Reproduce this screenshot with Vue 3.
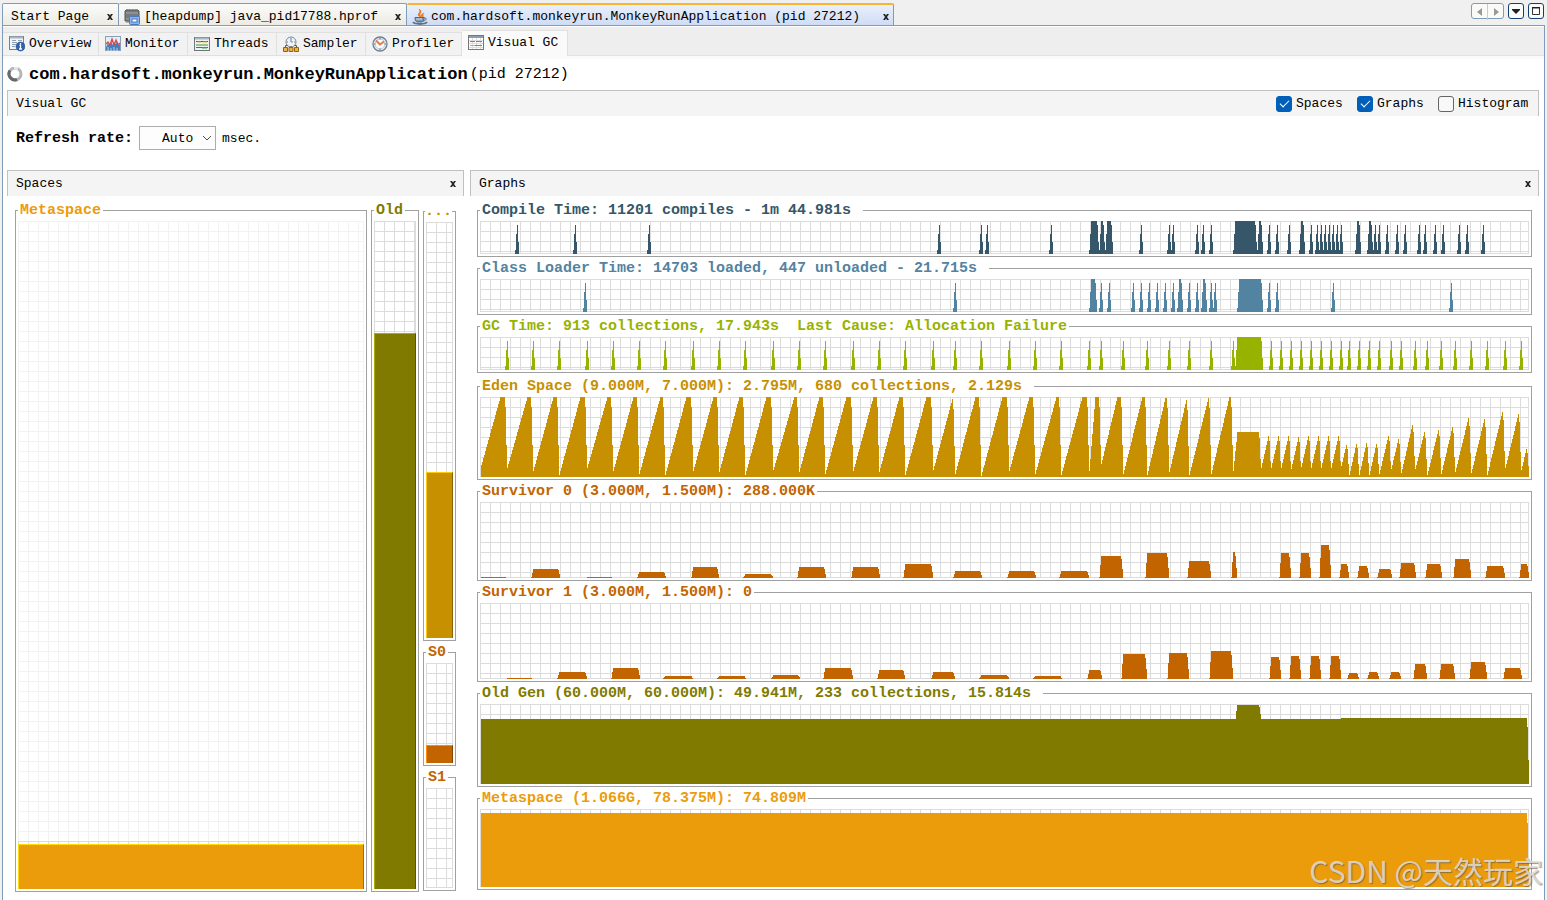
<script setup>
import { ref } from 'vue'

const ORIGIN = 480
const WIDTH = 1049

const refresh = ref('auto')
const showSpaces = ref(true)
const showGraphs = ref(true)
const showHistogram = ref(false)

function blank() {
  return new Array(WIDTH).fill(0)
}

function raise(cols, x, h) {
  const i = x - ORIGIN
  if (i >= 0 && i < WIDTH) cols[i] = Math.max(cols[i], h)
}

function fill(cols, from, to, h) {
  for (let x = from; x < to; x++) raise(cols, x, h)
}

// Activity series: short peaks plus plateaus [from, to) of full load
function activity(peaks, blocks) {
  const cols = blank()
  for (const p of peaks) {
    raise(cols, p - 2, 4)
    raise(cols, p - 1, 20)
    raise(cols, p, 29)
    raise(cols, p + 1, 12)
  }
  for (const [a, b] of blocks) {
    raise(cols, a - 2, 4)
    raise(cols, a - 1, 20)
    fill(cols, a, b, 33)
    raise(cols, b, 29)
    raise(cols, b + 1, 12)
  }
  return cols
}

function survivor(blocks) {
  const cols = blank()
  for (const [a, b, h] of blocks) {
    if (h > 1) {
      raise(cols, a - 2, 1)
      raise(cols, a - 1, Math.round(h * 0.6))
      raise(cols, b, Math.round(h * 0.85))
      raise(cols, b + 1, Math.round(h * 0.4))
    }
    fill(cols, a, b, h)
  }
  return cols
}

// Eden cycles: [collection x, x where the peak is reached, peak, level after collection]
function eden(cycles) {
  const cols = blank()
  let px = 480
  let level = 8
  for (const [g, top, peak, after] of cycles) {
    for (let x = px + 1; x < g - 2; x++) {
      const t = Math.min(1, (x - px) / (top - px))
      raise(cols, x, Math.round(level + (peak - level) * t))
    }
    raise(cols, g - 2, Math.round(peak * 0.87))
    raise(cols, g - 1, Math.round(peak * 0.4))
    raise(cols, g, after)
    px = g
    level = after
  }
  return cols
}

function path(cols, height) {
  let d = `M1 ${height}`
  for (let i = 1; i < cols.length; i++) {
    d += `V${height - cols[i]}H${i + 1}`
  }
  return d + `V${height}Z`
}

const compile = activity(
  [517, 575, 649, 939, 981, 987, 1051, 1141, 1169, 1173, 1197, 1203, 1211, 1269, 1277, 1289, 1311, 1317, 1321, 1325,
    1329, 1333, 1337, 1341, 1375, 1379, 1387, 1397, 1405, 1419, 1425, 1435, 1443, 1459, 1467, 1483],
  [[1091, 1097], [1101, 1103], [1107, 1111], [1235, 1255], [1259, 1261], [1301, 1303], [1357, 1359], [1369, 1371]]
)
const loader = activity(
  [585, 955, 1101, 1109, 1133, 1141, 1149, 1157, 1165, 1173, 1189, 1197, 1211, 1215, 1269, 1277, 1333, 1451],
  [[1091, 1095], [1179, 1181], [1203, 1205], [1239, 1261]]
)
const gc = activity(
  [507, 533, 559, 587, 613, 639, 665, 693, 719, 745, 773, 799, 825, 853, 879, 905, 933, 955, 981, 1009, 1035, 1061,
    1089, 1101, 1123, 1147, 1169, 1189, 1211, 1233, 1271, 1281, 1291, 1301, 1311, 1321, 1331, 1341, 1349, 1359, 1369,
    1379, 1391, 1401, 1415, 1427, 1441, 1455, 1471, 1487, 1505, 1521],
  [[1237, 1261]]
)
const edenCols = eden([
  [507, 500, 80, 9], [533, 527, 80, 6], [559, 553, 80, 2], [587, 580, 80, 9], [613, 607, 80, 6], [639, 633, 80, 3],
  [665, 660, 80, 2], [693, 686, 80, 6], [719, 713, 80, 5], [745, 739, 80, 2], [773, 766, 80, 7], [799, 794, 80, 5],
  [825, 819, 80, 3], [853, 846, 80, 6], [879, 873, 80, 5], [905, 899, 80, 2], [933, 926, 80, 7], [955, 952, 78, 3],
  [981, 975, 80, 1], [1009, 1002, 80, 6], [1035, 1029, 80, 3], [1061, 1056, 80, 2], [1089, 1082, 80, 6],
  [1101, 1095, 80, 13], [1123, 1117, 80, 3], [1147, 1142, 80, 2], [1169, 1165, 79, 5], [1189, 1186, 77, 2],
  [1211, 1208, 79, 3], [1233, 1229, 80, 6], [1261, 1237, 45, 9], [1271, 1268, 41, 9], [1281, 1278, 41, 9],
  [1291, 1288, 41, 8], [1301, 1298, 40, 10], [1311, 1308, 41, 9], [1321, 1318, 41, 9], [1331, 1328, 41, 9],
  [1341, 1338, 41, 11], [1349, 1346, 32, 2], [1359, 1356, 33, 2], [1369, 1366, 34, 2], [1379, 1376, 33, 3],
  [1391, 1388, 41, 8], [1401, 1398, 38, 4], [1415, 1412, 52, 8], [1427, 1424, 45, 2], [1441, 1438, 47, 3],
  [1455, 1452, 50, 5], [1471, 1468, 59, 4], [1487, 1484, 58, 2], [1505, 1502, 65, 9], [1521, 1518, 63, 7],
  [1529, 1526, 28, 7]
])
const s0 = survivor([
  [481, 506, 1], [533, 558, 9], [587, 612, 1], [639, 664, 6], [693, 717, 11], [745, 771, 4], [799, 824, 11],
  [853, 878, 11], [905, 931, 14], [955, 980, 7], [1009, 1034, 7], [1061, 1087, 7], [1101, 1121, 22], [1147, 1167, 25],
  [1189, 1209, 17], [1233, 1235, 26], [1281, 1289, 25], [1301, 1309, 25], [1321, 1329, 33], [1341, 1347, 14],
  [1359, 1367, 12], [1379, 1390, 9], [1401, 1414, 15], [1427, 1440, 14], [1455, 1469, 19], [1487, 1503, 12],
  [1521, 1527, 14]
])
const s1 = survivor([
  [507, 532, 1], [559, 585, 7], [613, 638, 11], [665, 691, 3], [719, 744, 3], [773, 798, 4], [825, 851, 11],
  [879, 903, 9], [933, 953, 7], [981, 1007, 4], [1035, 1060, 3], [1089, 1100, 9], [1123, 1145, 25], [1169, 1187, 26],
  [1211, 1231, 28], [1271, 1279, 22], [1291, 1299, 23], [1311, 1319, 23], [1331, 1339, 23], [1349, 1357, 6],
  [1369, 1377, 7], [1391, 1399, 7], [1415, 1425, 15], [1441, 1453, 15], [1471, 1485, 17], [1505, 1520, 11]
])
const old = blank()
fill(old, 481, 1341, 65)
fill(old, 1341, 1527, 66)
fill(old, 1236, 1237, 73)
fill(old, 1237, 1259, 79)
fill(old, 1259, 1260, 77)
fill(old, 1260, 1261, 70)
fill(old, 1527, 1528, 57)
fill(old, 1528, 1529, 24)
const meta = blank()
fill(meta, 481, 1527, 74)
fill(meta, 1527, 1528, 64)
fill(meta, 1528, 1529, 24)

const graphs = [
  { id: 'compile', title: 'Compile Time: 11201 compiles - 1m 44.981s', h: 33, cols: compile, trail: true },
  { id: 'loader', title: 'Class Loader Time: 14703 loaded, 447 unloaded - 21.715s', h: 33, cols: loader, trail: true },
  { id: 'gc', title: 'GC Time: 913 collections, 17.943s\u00a0 Last Cause: Allocation Failure', h: 33, cols: gc },
  { id: 'eden', title: 'Eden Space (9.000M, 7.000M): 2.795M, 680 collections, 2.129s', h: 80, cols: edenCols, trail: true },
  { id: 'survivor', title: 'Survivor 0 (3.000M, 1.500M): 288.000K', h: 76, cols: s0 },
  { id: 'survivor', title: 'Survivor 1 (3.000M, 1.500M): 0', h: 76, cols: s1 },
  { id: 'old', title: 'Old Gen (60.000M, 60.000M): 49.941M, 233 collections, 15.814s', h: 80, cols: old, trail: true },
  { id: 'meta', title: 'Metaspace (1.066G, 78.375M): 74.809M', h: 78, cols: meta }
].map((g) => ({ ...g, d: path(g.cols, g.h) }))

const used = { meta: 45 / 668, old: 556 / 668, eden: 166 / 416, s0: 18 / 100 }
const pct = (v) => `${(v * 100).toFixed(2)}%`
</script>

<template>
  <div class="app">
    <header class="topbar">
      <nav class="doc-tabs" aria-label="Documents">
        <div class="doc start">
          <a href="#start">Start Page</a>
          <button class="close" aria-label="Close Start Page"><svg viewBox="0 0 6 6"><path d="M0 0h2l1 1.500L4 0h2L4 3l2 3H4L3 4.500 2 6H0l2-3z" /></svg></button>
        </div>
        <div class="doc dump">
          <svg class="ic" viewBox="0 0 16 16">
            <path d="M2 1h12l1 1v10H1V2z" fill="#777b80" stroke="#55585c" />
            <path d="M2 4h12M2 10h5" stroke="#a4a7aa" />
            <path d="M3 12v2M5 12v2M3 0v1M6 0v1M9 0v1M12 0v1" stroke="#777" />
            <rect x="5.500" y="7.500" width="10" height="8" rx="1" fill="#8db4ea" stroke="#4a78bd" />
            <rect x="8" y="10" width="5" height="3" fill="#fff" stroke="#4a78bd" />
          </svg>
          <a href="#heapdump">[heapdump] java_pid17788.hprof</a>
          <button class="close" aria-label="Close heapdump"><svg viewBox="0 0 6 6"><path d="M0 0h2l1 1.500L4 0h2L4 3l2 3H4L3 4.500 2 6H0l2-3z" /></svg></button>
        </div>
        <div class="doc active">
          <svg class="ic" viewBox="0 0 16 16">
            <path d="M8 8C3 5 10 4 7 0c5 3-1 4 2 8zM10 8c-2-2 0-3 2-4-2 2 0 2-1 4z" fill="#ee7a1d" stroke="#e06c10" stroke-width=".5" />
            <path d="M3 8.500h9v1c0 2-1 3-2 3.500H5c-1-.5-2-1.500-2-3.500z" fill="#7f97ad" stroke="#4c6780" />
            <path d="M12 9c3-.5 3 2.500-1 3" fill="none" stroke="#4c6780" />
            <path d="M1 13c2 2.500 12 2.500 14 0" fill="none" stroke="#5a7389" stroke-width="2" />
            <path d="M4 10h6" stroke="#d4e0ea" />
          </svg>
          <a href="#app" aria-current="page">com.hardsoft.monkeyrun.MonkeyRunApplication (pid 27212)</a>
          <button class="close" aria-label="Close application"><svg viewBox="0 0 6 6"><path d="M0 0h2l1 1.500L4 0h2L4 3l2 3H4L3 4.500 2 6H0l2-3z" /></svg></button>
        </div>
      </nav>
      <div class="window-tools">
        <div class="pair">
          <button aria-label="Scroll left"><svg viewBox="0 0 14 14"><path d="M10 3v8L5 7z" fill="#999" /></svg></button>
          <button aria-label="Scroll right"><svg viewBox="0 0 14 14"><path d="M6 3v8l5-4z" fill="#999" /></svg></button>
        </div>
        <button class="tool" aria-label="Document list"><svg viewBox="0 0 14 14"><path d="M3 5h8v1L7 10 3 6z" fill="#222" /></svg></button>
        <button class="tool" aria-label="Maximize"><svg viewBox="0 0 14 14"><path d="M3.500 4v6.500h7V4z" fill="none" stroke="#333" /><path d="M3 3.500h8" stroke="#222" /></svg></button>
      </div>
    </header>

    <main class="window">
      <nav class="views" aria-label="Views">
        <a href="#overview" class="view wide">
          <svg class="ic" viewBox="0 0 16 16">
            <rect x=".5" y=".5" width="14" height="13" fill="#f1f4f8" stroke="#73808f" />
            <path d="M1 1.500h13" stroke="#aab4c0" stroke-width="2" />
            <path d="M3 4.500h4M3 6.500h5M3 8.500h4M3 10.500h3M9 4.500h4" stroke="#8fa1b5" />
            <circle cx="11.500" cy="10.500" r="4.500" fill="#2e62ad" stroke="#1c427e" stroke-width=".5" />
            <path d="M11.500 7v1.500M10.500 9.500h1v3M10 13h3" stroke="#fff" stroke-width="1.300" />
          </svg>
          Overview
        </a>
        <a href="#monitor" class="view">
          <svg class="ic" viewBox="0 0 16 16">
            <rect x=".5" y=".5" width="15" height="14" fill="#e6edf5" stroke="#8ba0b8" />
            <path d="M1 11l2-4 1 2 2-3 2 3 1-3 2 2 1-3 2 4 1-1v6H1z" fill="#3f83c4" />
            <path d="M1 8l2-2 2 3 2-6 2 6 2-5 2 5 2-2" fill="none" stroke="#d84848" stroke-width="1.300" />
            <path d="M3 15v-4M6 15v-3M9 15v-4M12 15v-3" stroke="#e7f0f9" stroke-width=".7" />
          </svg>
          Monitor
        </a>
        <a href="#threads" class="view">
          <svg class="ic" viewBox="0 0 16 16">
            <rect x=".5" y="1.500" width="15" height="13" fill="#eef0f2" stroke="#6c7783" />
            <path d="M1 2.500h14" stroke="#aab6c2" stroke-width="2" />
            <path d="M2 5.500h12" stroke="#555" /><path d="M3 6h4M9 6h4" stroke="#e0ba36" />
            <path d="M2 9h12" stroke="#3d9a3d" /><path d="M2 11.500h12" stroke="#666" /><path d="M8 12h5" stroke="#51b04c" />
          </svg>
          Threads
        </a>
        <a href="#sampler" class="view">
          <svg class="ic" viewBox="0 0 16 16">
            <circle cx="8" cy="6" r="5" fill="#eef4fa" stroke="#798796" />
            <path d="M8 2v4M4 6h1M11 6h1" stroke="#3a87c8" /><path d="M8 6h2" stroke="#e07030" />
            <path d="M8 10v2M2.500 12V9.500h2M13.500 12V9.500h-2" fill="none" stroke="#6c5520" />
            <path d="M.5 11.500h4v4h-4zM6 11.500h4v4H6zM11.500 11.500h4v4h-4z" fill="#e9b24a" stroke="#936513" />
          </svg>
          Sampler
        </a>
        <a href="#profiler" class="view wide">
          <svg class="ic" viewBox="0 0 16 16">
            <circle cx="8" cy="8" r="7" fill="#e9f0f7" stroke="#707f8e" stroke-width="1.300" />
            <circle cx="8" cy="8" r="5" fill="#f7fafc" stroke="#b9c9d8" />
            <path d="M4 4.500l4 4 4-3" fill="none" stroke="#e37c48" stroke-width="2" />
            <path d="M8 2v1.500M8 12.500V14M2 8h1.500M12.500 8H14" stroke="#5b7895" />
          </svg>
          Profiler
        </a>
        <a href="#visualgc" class="view selected" aria-current="page">
          <svg class="ic" viewBox="0 0 16 16">
            <rect x=".5" y=".5" width="15" height="14" fill="#fff" stroke="#777" />
            <path d="M1 2h14" stroke="#8b9eb4" stroke-width="2" />
            <path d="M4.500 3v11M8.500 3v11M12.500 3v11M1 5.500h14M1 8.500h14M1 12.500h14" stroke="#ddd" />
            <path d="M2 6.500h5M8 6.500h6" stroke="#40b428" /><path d="M2 10.500h5" stroke="#e9ad2f" /><path d="M7 10.500h7" stroke="#40b428" />
          </svg>
          Visual GC
        </a>
      </nav>

      <div class="content">
        <h1 class="title">
          <svg class="ic" viewBox="0 0 16 16">
            <circle cx="8" cy="7" r="6" fill="none" stroke="#b4b6ba" stroke-width="3" />
            <path d="M3 3.500a6 6 0 0 0 7 9" fill="none" stroke="#66686e" stroke-width="3" />
            <path d="M7 1a6 6 0 0 1 4 1" fill="none" stroke="#e6e6e9" stroke-width="3" />
          </svg>
          <b>com.hardsoft.monkeyrun.MonkeyRunApplication</b>
          <span>(pid 27212)</span>
        </h1>

        <div class="bar">
          <span>Visual GC</span>
          <div class="checks">
            <label><input v-model="showSpaces" type="checkbox" />Spaces</label>
            <label><input v-model="showGraphs" type="checkbox" />Graphs</label>
            <label class="long"><input v-model="showHistogram" type="checkbox" />Histogram</label>
          </div>
        </div>

        <div class="refresh">
          <label for="rate">Refresh rate:</label>
          <div class="pick">
            <select id="rate" v-model="refresh"><option value="auto">Auto</option></select>
            <svg viewBox="0 0 10 6"><path d="M1 1l4 4 4-4" fill="none" stroke="#555" /></svg>
          </div>
          <span>msec.</span>
        </div>

        <div class="panels">
          <section class="panel spaces">
            <div class="bar">
              <h2>Spaces</h2>
              <button class="close" aria-label="Close Spaces"><svg viewBox="0 0 6 6"><path d="M0 0h2l1 1.500L4 0h2L4 3l2 3H4L3 4.500 2 6H0l2-3z" /></svg></button>
            </div>
            <div class="space-cols">
              <fieldset class="space meta grow">
                <legend>Metaspace</legend>
                <div class="grid reserve">
                  <div class="committed"></div>
                  <div class="used" :style="{ height: pct(used.meta) }"></div>
                </div>
              </fieldset>
              <fieldset class="space old">
                <legend>Old</legend>
                <div class="grid"><div class="used" :style="{ height: pct(used.old) }"></div></div>
              </fieldset>
              <div class="young">
                <fieldset class="space eden">
                  <legend class="tight">...</legend>
                  <div class="grid"><div class="used" :style="{ height: pct(used.eden) }"></div></div>
                </fieldset>
                <fieldset class="space survivor">
                  <legend>S0</legend>
                  <div class="grid"><div class="used" :style="{ height: pct(used.s0) }"></div></div>
                </fieldset>
                <fieldset class="space survivor">
                  <legend>S1</legend>
                  <div class="grid"></div>
                </fieldset>
              </div>
            </div>
          </section>

          <section class="panel graphs">
            <div class="bar">
              <h2>Graphs</h2>
              <button class="close" aria-label="Close Graphs"><svg viewBox="0 0 6 6"><path d="M0 0h2l1 1.500L4 0h2L4 3l2 3H4L3 4.500 2 6H0l2-3z" /></svg></button>
            </div>
            <div class="graph-list">
              <fieldset v-for="g in graphs" :key="g.title" :class="g.id">
                <legend :class="{ trail: g.trail }">{{ g.title }}</legend>
                <div class="grid">
                  <svg class="chart" :viewBox="`0 0 1049 ${g.h}`" :height="g.h" preserveAspectRatio="none"><path :d="g.d" /></svg>
                </div>
              </fieldset>
            </div>
          </section>
        </div>
      </div>
    </main>
    <div class="watermark">CSDN @天然玩家</div>
  </div>
</template>

<style>
body {
  background: #f0f0f0;
}
</style>

<style scoped>
* {
  box-sizing: border-box;
}
.app {
  position: relative;
  display: flex;
  flex-direction: column;
  min-height: 100vh;
  padding: 0 2px;
  background: #f0f0f0;
  font: 13px/16px "Liberation Mono", "Noto Sans CJK SC", monospace;
  color: #000;
}
a {
  color: inherit;
  text-decoration: none;
  white-space: nowrap;
}
button {
  padding: 0;
  border: 0;
  background: none;
  font: inherit;
}
h1,
h2 {
  margin: 0;
  font: inherit;
}
.ic {
  flex: none;
  width: 16px;
  height: 16px;
}
.topbar {
  display: flex;
  justify-content: space-between;
  height: 25px;
  padding-top: 3px;
}
.doc-tabs {
  display: flex;
}
.doc {
  display: flex;
  align-items: center;
  height: 22px;
  padding: 4px 4px 0 5px;
  border: 1px solid #7f9db9;
  border-width: 1px 1px 0;
  border-radius: 2px 2px 0 0;
  background: linear-gradient(#fbfbfa, #ecebe4);
}
.doc + .doc {
  border-left-width: 0;
}
.doc a {
  flex: 1;
  margin-left: 4px;
}
.start {
  width: 117px;
  padding-left: 4px;
}
.dump {
  width: 288px;
}
.doc.active {
  width: 487px;
  padding: 3px 3px 0 5px;
  border-top: 2px solid #f9b431;
  background: linear-gradient(#e9f0fc, #cfdcf5);
}
.doc.active a {
  margin-left: 3px;
}
.close {
  display: flex;
  align-items: center;
  justify-content: center;
  width: 8px;
  height: 16px;
}
.close svg {
  width: 6px;
  height: 6px;
  fill: #222;
}
.window-tools {
  display: flex;
  gap: 4px;
  margin-right: 1px;
}
.window-tools button {
  width: 16px;
  height: 16px;
}
.window-tools svg {
  display: block;
  width: 14px;
  height: 14px;
}
.pair {
  display: flex;
  width: 33px;
  height: 16px;
  border: 1px solid #7f9db9;
  border-radius: 3px;
  background: #fafaf8;
}
.pair button + button {
  border-left: 1px solid #c8ccd2;
}
.window-tools .tool {
  border: 1px solid #123f73;
  border-radius: 3px;
  background: #fbfbf9;
}
.window {
  flex: 1;
  display: flex;
  flex-direction: column;
  border: 1px solid #7f9db9;
  border-bottom: 0;
  background: #fff;
}
.views {
  display: flex;
  align-items: flex-end;
  height: 33px;
  padding-bottom: 3px;
  border-top: 1px solid #fff;
  background: linear-gradient(#eee 28px, #e2e2e2 28px, #e2e2e2 29px, #fafafa 29px);
}
.view {
  display: flex;
  align-items: center;
  gap: 4px;
  width: 89px;
  height: 24px;
  padding-left: 6px;
  border: 1px solid #e0e0e0;
  border-left: 0;
  background: #f2f2f2;
}
.view.wide {
  width: 96px;
}
.view.selected {
  width: 106px;
  height: 26px;
  padding-bottom: 1px;
  border-bottom: 0;
  background: #fafafa;
}
.content {
  flex: 1;
  display: flex;
  flex-direction: column;
  padding: 0 5px 8px 4px;
}
.title {
  display: flex;
  align-items: center;
  height: 31px;
  padding-top: 1px;
  font-size: 15px;
  white-space: nowrap;
}
.title b {
  margin: 0 2px 0 6px;
  font-size: 17px;
}
.bar {
  display: flex;
  align-items: center;
  justify-content: space-between;
  height: 26px;
  padding: 0 6px 0 8px;
  border: 1px solid #c0c0c0;
  border-bottom: 0;
  background: #f4f4f4;
}
.checks {
  display: flex;
  gap: 14px;
  padding-right: 3px;
}
.checks label {
  display: flex;
  align-items: center;
  gap: 4px;
  width: 67px;
}
.checks .long {
  width: 91px;
}
.checks input {
  flex: none;
  appearance: none;
  display: flex;
  align-items: center;
  justify-content: center;
  width: 16px;
  height: 16px;
  margin: 0;
  border: 1px solid #666;
  border-radius: 3px;
  background: #f8f8f8;
}
.checks input:checked {
  border-color: #005fb8;
  background: #005fb8;
}
.checks input:checked::after {
  content: "";
  width: 8px;
  height: 4px;
  margin-top: -2px;
  border: solid #fff;
  border-width: 0 0 1px 1px;
  transform: rotate(-45deg);
}
.refresh {
  display: flex;
  align-items: center;
  gap: 6px;
  height: 44px;
  margin-bottom: 10px;
  padding-left: 9px;
}
.refresh label {
  padding-top: 2px;
  font-size: 15px;
  font-weight: bold;
}
.refresh span {
  padding-top: 2px;
}
.pick {
  position: relative;
}
.pick select {
  appearance: none;
  display: block;
  width: 77px;
  height: 24px;
  padding: 1px 0 0 22px;
  border: 1px solid #adadad;
  border-radius: 0;
  background: #fdfdfd;
  font: inherit;
  color: #000;
}
.pick svg {
  position: absolute;
  top: 9px;
  right: 4px;
  width: 10px;
  height: 6px;
  pointer-events: none;
}
.panels {
  flex: 1;
  display: flex;
  gap: 6px;
}
.panel {
  display: flex;
  flex-direction: column;
}
.spaces {
  flex: 457;
}
.graphs {
  flex: 1069;
  min-width: 0;
}
.space-cols {
  flex: 1;
  display: flex;
  gap: 4px;
  padding: 7px 8px 0;
}
.graph-list {
  display: flex;
  flex-direction: column;
  gap: 4px;
  padding: 7px 7px 0;
}
fieldset {
  min-width: 0;
  margin: 0;
  padding: 3px 2px 2px;
  border: 1px solid #a0a0a0;
}
legend {
  padding: 0 2px;
  font-size: 15px;
  line-height: 15px;
  font-weight: bold;
  white-space: nowrap;
}
.trail {
  padding-right: 12px;
}
.tight {
  margin-left: -1px;
  padding: 0;
}
.graph-list .eden {
  margin-top: 2px;
}
.space {
  display: flex;
  flex-direction: column;
}
.space.old {
  width: 48px;
}
.space.grow {
  flex: 1;
}
.young {
  display: flex;
  flex-direction: column;
  gap: 4px;
  width: 33px;
  padding: 1px 0;
}
.young .eden {
  flex: 416 0 auto;
}
.young .survivor {
  flex: 100 0 auto;
}
.grid {
  --line: #dcdcdc;
  background:
    repeating-linear-gradient(90deg, var(--line) 0 1px, transparent 1px 10px),
    repeating-linear-gradient(var(--line) 0 1px, transparent 1px 10px);
  box-shadow: inset -1px -1px 0 var(--line);
}
.grid.reserve {
  --line: #f2f2f2;
}
.space .grid {
  display: flex;
  flex-direction: column;
  justify-content: flex-end;
  height: 100%;
}
.committed {
  height: 3px;
  border-top: 1px solid #dcdcdc;
  background: repeating-linear-gradient(90deg, #dcdcdc 0 1px, transparent 1px 10px);
}
.used {
  border-style: solid;
  border-width: 1px 1px 0;
  background: var(--fill);
  border-color: var(--hi) var(--lo) var(--lo) var(--hi);
}
.chart {
  display: block;
  width: 100%;
  fill: var(--fill);
  shape-rendering: crispEdges;
}
fieldset legend {
  color: var(--fill);
}
.compile {
  --fill: #355769;
}
.loader {
  --fill: #5283a1;
}
.gc {
  --fill: #98b200;
}
.eden {
  --fill: #c79000;
  --hi: #ffcb00;
  --lo: #8a6400;
}
.survivor {
  --fill: #c26500;
  --hi: #ff8c00;
  --lo: #874600;
}
.old {
  --fill: #807b00;
  --hi: #b2ac00;
  --lo: #595600;
}
.meta {
  --fill: #eb9c0b;
  --hi: #ffdb00;
  --lo: #a46d08;
}
.watermark {
  position: absolute;
  right: 4px;
  bottom: 12px;
  font: 30px/36px "Noto Sans CJK SC", sans-serif;
  color: rgba(226, 222, 214, 0.85);
  text-shadow: 1px 1px 1px rgba(90, 80, 70, 0.6);
  pointer-events: none;
}
</style>
